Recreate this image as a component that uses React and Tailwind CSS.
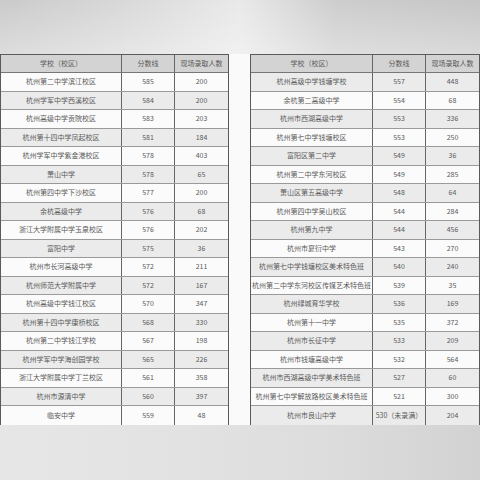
import React from "react";

const left = [
  ["杭州第二中学滨江校区", "585", "200"],
  ["杭州学军中学西溪校区", "584", "200"],
  ["杭州高级中学贡院校区", "583", "203"],
  ["杭州第十四中学凤起校区", "581", "184"],
  ["杭州学军中学紫金港校区", "578", "403"],
  ["萧山中学", "578", "65"],
  ["杭州第四中学下沙校区", "577", "200"],
  ["余杭高级中学", "576", "68"],
  ["浙江大学附属中学玉泉校区", "576", "202"],
  ["富阳中学", "575", "36"],
  ["杭州市长河高级中学", "572", "211"],
  ["杭州师范大学附属中学", "572", "167"],
  ["杭州高级中学钱江校区", "570", "347"],
  ["杭州第十四中学康桥校区", "568", "330"],
  ["杭州第二中学钱江学校", "567", "198"],
  ["杭州学军中学海创园学校", "565", "226"],
  ["浙江大学附属中学丁兰校区", "561", "358"],
  ["杭州市源清中学", "560", "397"],
  ["临安中学", "559", "48"],
];

const right = [
  ["杭州高级中学钱塘学校", "557", "448"],
  ["余杭第二高级中学", "554", "68"],
  ["杭州市西湖高级中学", "553", "336"],
  ["杭州第七中学钱塘校区", "553", "250"],
  ["富阳区第二中学", "549", "36"],
  ["杭州第二中学东河校区", "549", "285"],
  ["萧山区第五高级中学", "548", "64"],
  ["杭州第四中学吴山校区", "544", "284"],
  ["杭州第九中学", "544", "456"],
  ["杭州市夏衍中学", "543", "270"],
  ["杭州第七中学钱塘校区美术特色班", "540", "240"],
  ["杭州第二中学东河校区传媒艺术特色班", "539", "35"],
  ["杭州绿城育华学校", "536", "169"],
  ["杭州第十一中学", "535", "372"],
  ["杭州市长征中学", "533", "209"],
  ["杭州市钱塘高级中学", "532", "564"],
  ["杭州市西湖高级中学美术特色班", "527", "60"],
  ["杭州第七中学解放路校区美术特色班", "521", "300"],
  ["杭州市良山中学", "530（未录满）", "204"],
];

function Table({ rows, cols, oddGray }) {
  return (
    <div className="flex flex-col border border-[#5a5a5a] text-[7px] leading-none text-[#5a5a5a]">
      <div className={`grid ${cols} h-[18px] bg-[#d3d3d3] border-b border-[#777]`}>
        <div className="flex items-center justify-center border-r border-[#666]">学校（校区）</div>
        <div className="flex items-center justify-center border-r border-[#666]">分数线</div>
        <div className="flex items-center justify-center">现场录取人数</div>
      </div>
      {rows.map((r, i) => {
        const gray = oddGray ? i % 2 === 0 : i % 2 === 1;
        return (
          <div
            key={i}
            className={`grid ${cols} h-[18.5px] border-b border-[#9a9a9a] last:border-b-0 ${
              gray ? "bg-[#ebebeb]" : "bg-[#fbfbfb]"
            }`}
          >
            <div className="flex items-center justify-center border-r border-[#666] whitespace-nowrap">{r[0]}</div>
            <div className="flex items-center justify-center border-r border-[#666] whitespace-nowrap">{r[1]}</div>
            <div className="flex items-center justify-center">{r[2]}</div>
          </div>
        );
      })}
    </div>
  );
}

export default function App() {
  return (
    <div
      className="w-[480px] h-[480px] flex flex-col overflow-hidden bg-[linear-gradient(90deg,#cacaca_0%,#d8d8d8_25%,#e9e9e9_50%,#cdcdcd_70%,#c6c6c6_100%)]"
      style={{ fontFamily: '"Noto Sans CJK SC", "Noto Sans", sans-serif' }}
    >
      <div className="h-[54px] shrink-0 bg-[linear-gradient(180deg,rgba(255,255,255,0)_0%,rgba(255,255,255,0.35)_100%)]" />
      <div className="flex bg-[#fafafa] h-[371px] shrink-0">
        <div className="w-[229px]">
          <Table rows={left} cols="grid-cols-[121px_53px_1fr]" oddGray={false} />
        </div>
        <div className="w-[21px]" />
        <div className="w-[230px]">
          <Table rows={right} cols="grid-cols-[122px_53px_1fr]" oddGray={true} />
        </div>
      </div>
      <div className="flex-1 bg-[linear-gradient(90deg,#e6e6e6_0%,#e2e2e2_40%,#dcdcdc_70%,#d2d2d2_100%)]" />
    </div>
  );
}
